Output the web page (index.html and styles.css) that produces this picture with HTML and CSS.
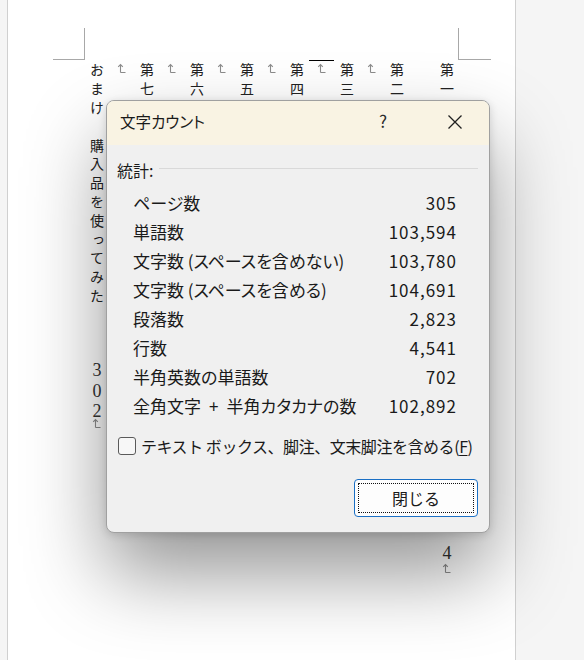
FILE: index.html
```html
<!DOCTYPE html>
<html lang="ja">
<head>
<meta charset="utf-8">
<title>文字カウント</title>
<link rel="stylesheet" href="styles.css">
</head>
<body>
<div class="page">
  <span class="crop crop-tl"></span>
  <span class="crop crop-tr"></span>
  <div class="vtext">
    <p class="col">第一章　はじめに　　　　　　　　　　　　　　　　　　<span class="num pn">4</span><svg class="pm" viewBox="0 0 10 10"><path d="M3.5 9.5V1.5M1.2 3.8L3.5 1.5 5.8 3.8M3.5 9.5H8.5"/></svg></p>
    <p class="col"></p>
    <p class="col">第二章</p>
    <p class="col"><svg class="pm" viewBox="0 0 10 10"><path d="M3.5 9.5V1.5M1.2 3.8L3.5 1.5 5.8 3.8M3.5 9.5H8.5"/></svg></p>
    <p class="col">第三章</p>
    <p class="col cur"><svg class="pm" viewBox="0 0 10 10"><path d="M3.5 9.5V1.5M1.2 3.8L3.5 1.5 5.8 3.8M3.5 9.5H8.5"/></svg></p>
    <p class="col">第四章</p>
    <p class="col"><svg class="pm" viewBox="0 0 10 10"><path d="M3.5 9.5V1.5M1.2 3.8L3.5 1.5 5.8 3.8M3.5 9.5H8.5"/></svg></p>
    <p class="col">第五章</p>
    <p class="col"><svg class="pm" viewBox="0 0 10 10"><path d="M3.5 9.5V1.5M1.2 3.8L3.5 1.5 5.8 3.8M3.5 9.5H8.5"/></svg></p>
    <p class="col">第六章</p>
    <p class="col"><svg class="pm" viewBox="0 0 10 10"><path d="M3.5 9.5V1.5M1.2 3.8L3.5 1.5 5.8 3.8M3.5 9.5H8.5"/></svg></p>
    <p class="col">第七章</p>
    <p class="col"><svg class="pm" viewBox="0 0 10 10"><path d="M3.5 9.5V1.5M1.2 3.8L3.5 1.5 5.8 3.8M3.5 9.5H8.5"/></svg></p>
    <p class="col">おまけ　購入品を使ってみた　　　<span class="num pn2">302</span><svg class="pm pm2" viewBox="0 0 10 10"><path d="M3.5 9.5V1.5M1.2 3.8L3.5 1.5 5.8 3.8M3.5 9.5H8.5"/></svg></p>
  </div>
</div>

<div class="dialog">
  <div class="titlebar">
    <span class="title">文字カウント</span>
    <span class="help">?</span>
    <span class="close"><svg viewBox="0 0 16 16"><path d="M1.5 1.5L14.5 14.5M14.5 1.5L1.5 14.5"/></svg></span>
  </div>
  <div class="body">
    <div class="group"><span class="group-label">統計:</span><span class="rule"></span></div>
    <div class="stats">
      <div class="row"><span class="label">ページ数</span><span class="value">305</span></div>
      <div class="row"><span class="label">単語数</span><span class="value">103,594</span></div>
      <div class="row"><span class="label">文字数 (スペースを含めない)</span><span class="value">103,780</span></div>
      <div class="row"><span class="label">文字数 (スペースを含める)</span><span class="value">104,691</span></div>
      <div class="row"><span class="label">段落数</span><span class="value">2,823</span></div>
      <div class="row"><span class="label">行数</span><span class="value">4,541</span></div>
      <div class="row"><span class="label">半角英数の単語数</span><span class="value">702</span></div>
      <div class="row"><span class="label">全角文字<span class="plus">+</span>半角カタカナの数</span><span class="value">102,892</span></div>
    </div>
    <label class="check"><span class="box"></span><span class="check-text">テキスト ボックス、脚注、文末脚注を含める(<u>F</u>)</span></label>
    <div class="actions"><button class="btn" type="button"><span class="focus">閉じる</span></button></div>
  </div>
</div>
</body>
</html>
```

FILE: styles.css
```css
html, body {
  margin: 0;
  padding: 0;
}
body {
  width: 584px;
  height: 660px;
  overflow: hidden;
  position: relative;
  background: #f5f5f5;
  font-family: "Noto Sans CJK JP", sans-serif;
}

/* document page */
.page {
  position: relative;
  margin-left: 7px;
  width: 509px;
  height: 660px;
  box-sizing: border-box;
  background: #ffffff;
  border-left: 1px solid #d0d0d0;
  border-right: 1px solid #d0d0d0;
  padding: 60px 0 0 76px;
}
.crop {
  position: absolute;
  top: 28px;
  height: 31px;
  border-bottom: 1px solid #a8a8a8;
}
.crop-tl {
  left: 45px;
  width: 31px;
  border-right: 1px solid #a8a8a8;
}
.crop-tr {
  left: 450px;
  width: 32px;
  border-left: 1px solid #a8a8a8;
}
.vtext {
  writing-mode: vertical-rl;
  text-orientation: upright;
  width: 375px;
  height: 580px;
  font-family: "Noto Sans CJK JP", serif;
  font-size: 14px;
  letter-spacing: 4.8px;
  color: #222;
}
.col {
  margin: 0;
  width: 25px;
  line-height: 25px;
  padding-top: 3px;
  white-space: nowrap;
}
.cur {
  border-top: 1px solid #000;
  padding-top: 2px;
}
.num {
  font-family: "Liberation Serif", serif;
  font-size: 18px;
  letter-spacing: 0.5px;
  color: #333;
}
.pn {
  margin-top: -9px;
}
.pn2 {
  margin-top: -4px;
}
.pm {
  width: 10px;
  height: 10px;
  fill: none;
  stroke: #8c8c8c;
  stroke-width: 1.1;
}
.pm2 {
  margin-top: -3px;
}

/* dialog */
.dialog {
  position: absolute;
  left: 106px;
  top: 100px;
  width: 384px;
  height: 433px;
  box-sizing: border-box;
  border: 1px solid #a0a0a0;
  border-radius: 8px;
  background: #f0f0f0;
  overflow: hidden;
  box-shadow: 0 40px 80px rgba(0, 0, 0, 0.42), 0 2px 8px rgba(0, 0, 0, 0.14);
  color: #1a1a1a;
  font-feature-settings: "palt";
}
.titlebar {
  height: 44px;
  box-sizing: border-box;
  display: flex;
  align-items: center;
  padding-left: 13px;
  padding-bottom: 5px;
  background: #f9f3e3;
}
.title {
  font-size: 15.5px;
  line-height: 20px;
}
.help {
  margin-left: auto;
  width: 40px;
  text-align: center;
  font-size: 17px;
  line-height: 20px;
  color: #2a2a2a;
}
.close {
  margin-left: 30px;
  margin-right: 12px;
  width: 44px;
  display: flex;
  justify-content: center;
  padding-top: 3px;
}
.close svg {
  width: 16px;
  height: 16px;
  fill: none;
  stroke: #202020;
  stroke-width: 1.3;
}
.body {
  padding: 14px 11px 0 10px;
}
.group {
  display: flex;
  align-items: center;
  height: 22px;
  font-size: 16px;
  padding-bottom: 1px;
}
.rule {
  flex: 1;
  height: 1px;
  background: #d9d9d9;
  margin-left: 6px;
  margin-bottom: 3px;
}
.stats {
  margin-top: 6px;
  padding: 0 22px 0 16px;
}
.row {
  display: flex;
  justify-content: space-between;
  align-items: center;
  height: 29px;
  font-size: 17px;
}
.plus {
  margin: 0 8px;
}
.value {
  letter-spacing: 1px;
  margin-right: -1px;
}
.check {
  display: flex;
  align-items: center;
  height: 29px;
  margin-top: 11px;
  margin-left: 1px;
  font-size: 16px;
}
.check-text {
  font-feature-settings: normal;
  letter-spacing: -0.45px;
}
.box {
  width: 16px;
  height: 16px;
  border: 1px solid #5a5a5a;
  border-radius: 3px;
  background: #f7f7f7;
  margin-right: 5px;
  flex: none;
}
.check-text u {
  text-underline-offset: 2px;
}
.actions {
  display: flex;
  justify-content: flex-end;
  margin-top: 19px;
}
.btn {
  width: 124px;
  height: 38px;
  box-sizing: border-box;
  padding: 3px;
  border: 1px solid #1a6fc4;
  border-radius: 4px;
  background: #fdfdfd;
  font-family: "Noto Sans CJK JP", sans-serif;
  font-size: 16px;
  color: #1a1a1a;
  display: flex;
}
.focus {
  flex: 1;
  display: flex;
  align-items: center;
  justify-content: center;
  border: 1px dotted #111;
}
```
